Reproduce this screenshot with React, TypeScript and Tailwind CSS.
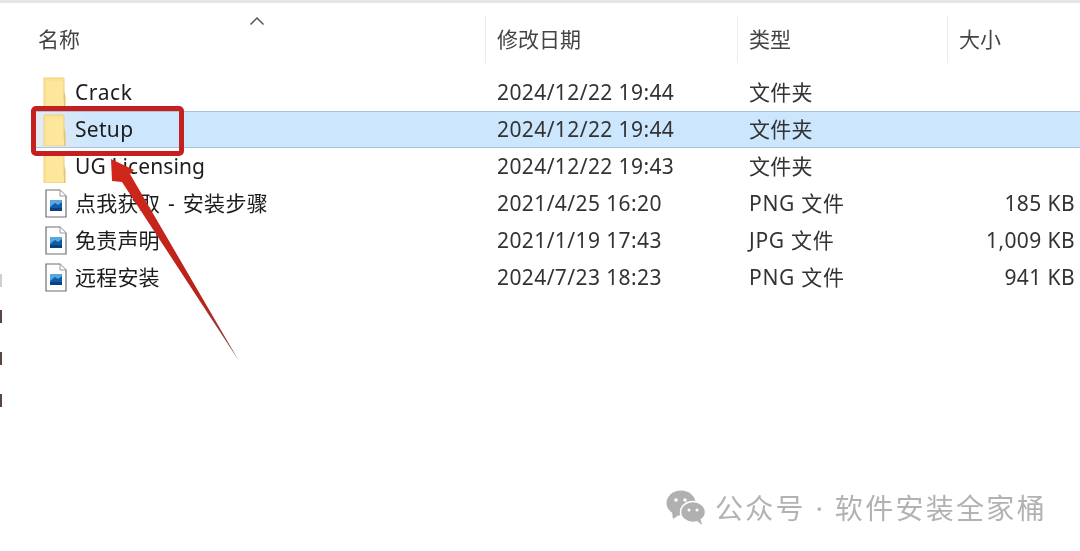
const FONT = "font-['Noto_Sans','Noto_Sans_CJK_SC',sans-serif]";

function Folder() {
  return (
    <svg width="24" height="32" viewBox="0 0 24 32" className="shrink-0">
      <path d="M1 1H21V32H1Z" fill="#fce28f" stroke="#ecd183" strokeWidth="1" />
      <path d="M3 4H20V25L22 22V31H3Z" fill="#fde79c" />
      <path d="M21 14L22.5 19V32H21Z" fill="#e6c36c" />
    </svg>
  );
}

function ImageFile() {
  return (
    <svg width="22" height="29" viewBox="0 0 22 29" className="shrink-0">
      <path d="M1 1H15L21 7V28H1Z" fill="#fff" stroke="#6f6f6f" strokeWidth="1.2" />
      <path d="M15 1V7H21" fill="#fff" stroke="#9a9a9a" strokeWidth="1" />
      <rect x="5" y="11" width="12" height="11" fill="#0f5da8" />
      <path d="M5 18L10 14L13 16L17 13V11H5Z" fill="#5ba6dc" />
      <rect x="5" y="19" width="12" height="3" fill="#0b3f7d" />
    </svg>
  );
}

const rows = [
  { name: "Crack", nameClass: "tracking-[0.6px]", date: "2024/12/22 19:44", type: "文件夹", size: "", folder: true },
  { name: "Setup", nameClass: "tracking-[0.3px]", date: "2024/12/22 19:44", type: "文件夹", size: "", folder: true, selected: true },
  { name: "UG Licensing", nameClass: "tracking-[0.1px]", date: "2024/12/22 19:43", type: "文件夹", size: "", folder: true },
  { name: "点我获取 - 安装步骤", nameClass: "tracking-[0.3px] [word-spacing:2px]", date: "2021/4/25 16:20", type: "PNG 文件", size: "185 KB" },
  { name: "免责声明", nameClass: "tracking-[0.2px]", date: "2021/1/19 17:43", type: "JPG 文件", size: "1,009 KB" },
  { name: "远程安装", nameClass: "tracking-[0.2px]", date: "2024/7/23 18:23", type: "PNG 文件", size: "941 KB" },
];

export default function App() {
  return (
    <div className={`${FONT} relative h-[551px] w-[1080px] overflow-hidden bg-white text-[21px] text-[#1c1c1c] blur-[0.4px]`}>
      <div className="h-[3px] bg-[#e6e6e6]" />

      {/* column headers */}
      <div className="relative flex h-[71px] items-start pt-[13px] text-[#444]">
        <div className="w-[485px] pl-[38px] pt-[8px]">名称</div>
        <div className="h-[47px] w-[252px] border-l border-[#ececec] pl-[11px] pt-[8px]">修改日期</div>
        <div className="h-[47px] w-[210px] border-l border-[#ececec] pl-[11px] pt-[8px]">类型</div>
        <div className="h-[47px] flex-1 border-l border-[#ececec] pl-[11px] pt-[8px]">大小</div>
        <svg width="16" height="10" viewBox="0 0 16 10" className="absolute left-[249px] top-[13px]" fill="none" stroke="#555" strokeWidth="1.5">
          <path d="M1.5 8.5L8 2L14.5 8.5" />
        </svg>
      </div>

      {/* rows */}
      <div className="flex flex-col">
        {rows.map((r) => (
          <div
            key={r.name}
            className={`flex h-[37px] items-center ${r.selected ? "ml-[33px] border-y border-[#a9c3da] bg-gradient-to-r from-[#e4ecf2] to-[#cce6fd] to-[6%]" : ""}`}
          >
            <div className={`flex items-center ${r.selected ? "w-[452px]" : "w-[485px]"}`}>
              <div className={`flex justify-end pr-[8px] ${r.selected ? "w-[42px]" : "w-[75px]"}`}>
                {r.folder ? <Folder /> : <ImageFile />}
              </div>
              <span className={`whitespace-nowrap ${r.nameClass}`}>{r.name}</span>
            </div>
            <div className="w-[252px] whitespace-nowrap pl-[12px] tracking-[0.4px] text-[#333]">{r.date}</div>
            <div className={`w-[210px] whitespace-nowrap pl-[12px] text-[#333] ${r.size ? "tracking-[0.7px]" : "tracking-[0.2px]"}`}>{r.type}</div>
            <div className="flex-1 whitespace-nowrap pr-[5px] text-right tracking-[0.4px] text-[#333]">{r.size}</div>
          </div>
        ))}
      </div>

      {/* annotation: red box */}
      <div className="absolute left-[31px] top-[106px] h-[50px] w-[153px] rounded-[5px] border-[5px] border-[#c4201f]" />

      {/* annotation: arrow */}
      <svg width="1080" height="551" className="pointer-events-none absolute left-0 top-0">
        <defs>
          <linearGradient id="arrowFill" x1="120" y1="170" x2="239" y2="361" gradientUnits="userSpaceOnUse">
            <stop offset="0" stopColor="#d0261c" />
            <stop offset="0.7" stopColor="#b8231a" />
            <stop offset="1" stopColor="#7a5a55" />
          </linearGradient>
        </defs>
        <polygon points="111,159 134,170 130,174 239,361 122,182 112,181" fill="url(#arrowFill)" />
      </svg>

      {/* left edge ticks */}
      <div className="absolute left-0 top-[274px] h-[13px] w-[2px] bg-[#cfcfcf]" />
      <div className="absolute left-0 top-[310px] h-[13px] w-[2px] bg-[#5a4540]" />
      <div className="absolute left-0 top-[352px] h-[13px] w-[2px] bg-[#5a4540]" />
      <div className="absolute left-0 top-[394px] h-[13px] w-[2px] bg-[#5a4540]" />

      {/* watermark */}
      <div className="absolute left-[666px] top-[488px] flex h-[40px] items-center gap-[9px] text-[28px] leading-none text-[#b2b2b2]">
        <svg width="40" height="36" viewBox="0 0 40 36" fill="#b0b0b0" className="shrink-0">
          <ellipse cx="15" cy="13" rx="14.5" ry="12.5" />
          <path d="M6 22L7 29L13 25Z" />
          <ellipse cx="27" cy="22" rx="12.5" ry="10.5" fill="#b0b0b0" stroke="#fff" strokeWidth="1.5" />
          <path d="M31 31L36 35L34.5 29Z" />
          <circle cx="10" cy="10" r="1.8" fill="#fff" />
          <circle cx="19" cy="10" r="1.8" fill="#fff" />
          <circle cx="23" cy="20" r="1.5" fill="#fff" />
          <circle cx="31" cy="20" r="1.5" fill="#fff" />
        </svg>
        <span className="whitespace-nowrap tracking-[2.3px]">公众号 · 软件安装全家桶</span>
      </div>
    </div>
  );
}
